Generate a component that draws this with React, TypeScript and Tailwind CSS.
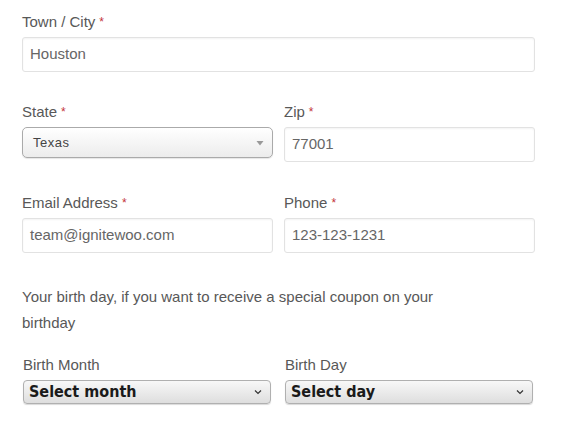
import type React from 'react';

export default function App() {
  return (
    <main className="min-h-screen w-[563px] bg-white pl-[22px] pr-[28px] pt-[11px] font-['Liberation_Sans',Arial,sans-serif] text-[#585858]">
      <Field label="Town / City" required>
        <TextInput value="Houston" />
      </Field>

      <div className="mt-[29px] grid grid-cols-2 gap-x-[11px]">
        <Field label="State" required>
          <StateSelect value="Texas" />
        </Field>
        <Field label="Zip" required>
          <TextInput value="77001" />
        </Field>
      </div>

      <div className="mt-[30px] grid grid-cols-2 gap-x-[11px]">
        <Field label="Email Address" required>
          <TextInput value="team@ignitewoo.com" />
        </Field>
        <Field label="Phone" required>
          <TextInput value="123-123-1231" />
        </Field>
      </div>

      <p className="mt-[31px] pr-[70px] text-[15px] leading-[26px]">
        Your birth day, if you want to receive a special coupon on your birthday
      </p>

      <div className="mt-[19px] grid grid-cols-2 gap-x-[14px] pl-[1px] pr-[2px]">
        <div>
          <div className="text-[15px] leading-[20px]">Birth Month</div>
          <NativeSelect value="Select month" />
        </div>
        <div>
          <div className="text-[15px] leading-[20px]">Birth Day</div>
          <NativeSelect value="Select day" />
        </div>
      </div>
    </main>
  );
}

function Field({ label, required, children }: { label: string; required?: boolean; children: React.ReactNode }) {
  return (
    <div>
      <label className="mb-[3px] block text-[15px] leading-[22px]">
        {label}
        {required && <span className="relative -top-[1px] ml-[4px] text-[12px] text-[#c4343a]">*</span>}
      </label>
      {children}
    </div>
  );
}

function TextInput({ value }: { value: string }) {
  return (
    <div className="flex h-[35px] items-center rounded-[3px] border border-[#e2e2e2] bg-white px-[7px] text-[15px] text-[#666] shadow-[inset_0_1px_2px_rgba(0,0,0,0.05)]">
      {value}
    </div>
  );
}

function StateSelect({ value }: { value: string }) {
  return (
    <div className="flex h-[31px] items-center justify-between rounded-[5px] border border-[#aaa] bg-gradient-to-b from-white to-[#ececec] pl-[10px] pr-[7px] text-[13px] tracking-[0.5px] text-[#444] shadow-[0_1px_1px_rgba(0,0,0,0.1)]">
      <span>{value}</span>
      <svg width="8" height="6" viewBox="0 0 8 6" className="mr-[1px]">
        <path d="M0.5 1 L7.5 1 L4 5.5 Z" fill="#999" />
      </svg>
    </div>
  );
}

function NativeSelect({ value }: { value: string }) {
  return (
    <div className="mt-[5px] flex h-[24px] items-center justify-between rounded-[4px] border border-[#b0b0b0] bg-gradient-to-b from-[#f8f8f8] to-[#dedede] pl-[5px] pr-[8px] font-['DejaVu_Sans_Condensed','DejaVu_Sans',sans-serif] text-[16px] font-bold text-[#1a1a1a] shadow-[0_1px_1px_rgba(0,0,0,0.15)] [font-stretch:condensed]">
      <span className="leading-none">{value}</span>
      <svg width="8" height="6" viewBox="0 0 8 6">
        <path d="M1 1.5 L4 4.5 L7 1.5" fill="none" stroke="#333" strokeWidth="1.2" />
      </svg>
    </div>
  );
}
